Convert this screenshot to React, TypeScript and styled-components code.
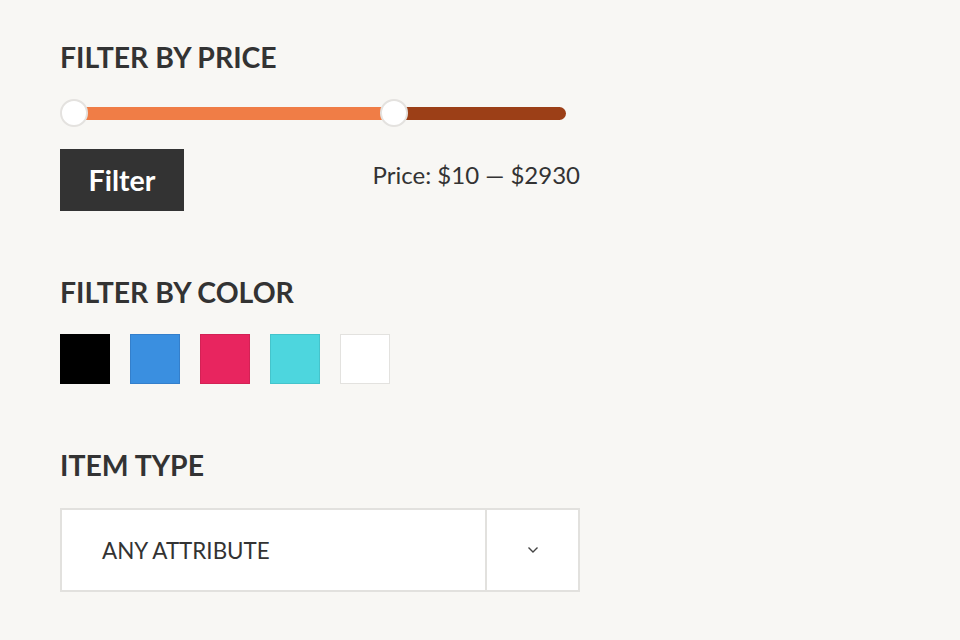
import React from 'react';
import styled, { createGlobalStyle } from 'styled-components';

const GlobalStyle = createGlobalStyle`
  html, body {
    margin: 0;
    padding: 0;
    background: #f8f7f4;
  }
  body {
    font-family: Lato, "Open Sans", Arial, sans-serif;
    color: #333333;
  }
`;

// --- STYLED COMPONENTS ---

const Page = styled.div`
  width: 960px;
  height: 640px;
  box-sizing: border-box;
  padding: 40px 0 0 60px;
  display: flex;
  flex-direction: column;
  gap: 64px;
  overflow: hidden;
`;

const Widget = styled.section`
  width: 520px;
  display: flex;
  flex-direction: column;
`;

const Heading = styled.h2`
  margin: 0 0 24px;
  font-size: 28.4px;
  line-height: 35px;
  font-weight: 700;
  color: #333333;
`;

const SliderWrap = styled.div`
  position: relative;
  width: 506px;
  height: 28px;
  display: flex;
  align-items: center;
`;

const Track = styled.div`
  position: relative;
  margin-left: 14px;
  flex: 1;
  height: 13px;
  border-radius: 0 7px 7px 0;
  background: #9c3f17;
  overflow: hidden;
`;

const Range = styled.div`
  height: 100%;
  background: #f07d46;
`;

const Thumb = styled.span`
  position: absolute;
  top: 0;
  width: 24px;
  height: 24px;
  margin-left: -14px;
  border-radius: 50%;
  background: #ffffff;
  border: 2px solid #e4e2df;
`;

const PriceRow = styled.div`
  margin-top: 22px;
  display: flex;
  align-items: flex-start;
  justify-content: space-between;
`;

const FilterButton = styled.button`
  width: 124px;
  height: 62px;
  border: 0;
  background: #333333;
  color: #ffffff;
  font-family: Lato, Arial, sans-serif;
  font-size: 28.5px;
  font-weight: 700;
  padding: 0;
  cursor: pointer;
`;

const PriceLabel = styled.span`
  margin-top: 12px;
  font-size: 24px;
  line-height: 1.2;
  color: #333333;
`;

const Swatches = styled.div`
  display: flex;
  gap: 20px;
`;

const Swatch = styled.span<{ $fill: string; $edge: string }>`
  width: 50px;
  height: 50px;
  box-sizing: border-box;
  background: ${(p) => p.$fill};
  border: 1px solid ${(p) => p.$edge};
`;

const Select = styled.div`
  margin-top: 1px;
  width: 520px;
  height: 84px;
  box-sizing: border-box;
  border: 2px solid #e2e1de;
  background: #ffffff;
  display: flex;
`;

const SelectValue = styled.div`
  flex: 1;
  display: flex;
  align-items: center;
  padding-left: 40px;
  font-size: 22.4px;
  color: #333333;
`;

const SelectArrow = styled.div`
  width: 91px;
  border-left: 2px solid #e2e1de;
  display: flex;
  align-items: center;
  justify-content: center;
  color: #444444;
`;

// --- DATA ---

const colors = [
  { fill: '#000000', edge: '#000000' },
  { fill: '#3a8fe0', edge: '#347fcb' },
  { fill: '#e8255f', edge: '#d32255' },
  { fill: '#4dd6de', edge: '#45c4cb' },
  { fill: '#ffffff', edge: '#e3e2df' },
];

const trackWidth = 492;
const max = 100;
const low = 0;
const high = 65;

// --- COMPONENT ---

const App: React.FC = () => {
  const pct = ((high - low) / max) * 100;
  return (
    <>
      <GlobalStyle />
      <Page>
        <Widget>
          <Heading>FILTER BY PRICE</Heading>
          <SliderWrap>
            <Track>
              <Range style={{ width: `${pct}%` }} />
            </Track>
            <Thumb style={{ left: 14 + (low / max) * trackWidth }} />
            <Thumb style={{ left: 14 + (high / max) * trackWidth }} />
          </SliderWrap>
          <PriceRow>
            <FilterButton>Filter</FilterButton>
            <PriceLabel>Price: $10 — $2930</PriceLabel>
          </PriceRow>
        </Widget>

        <Widget>
          <Heading>FILTER BY COLOR</Heading>
          <Swatches>
            {colors.map((c) => (
              <Swatch key={c.fill} $fill={c.fill} $edge={c.edge} />
            ))}
          </Swatches>
        </Widget>

        <Widget>
          <Heading>ITEM TYPE</Heading>
          <Select>
            <SelectValue>ANY ATTRIBUTE</SelectValue>
            <SelectArrow>
              <svg width="12" height="8" viewBox="0 0 12 8" fill="none">
                <path d="M1.5 1.5 L6 6 L10.5 1.5" stroke="currentColor" strokeWidth="1.4" />
              </svg>
            </SelectArrow>
          </Select>
        </Widget>
      </Page>
    </>
  );
};

export default App;
